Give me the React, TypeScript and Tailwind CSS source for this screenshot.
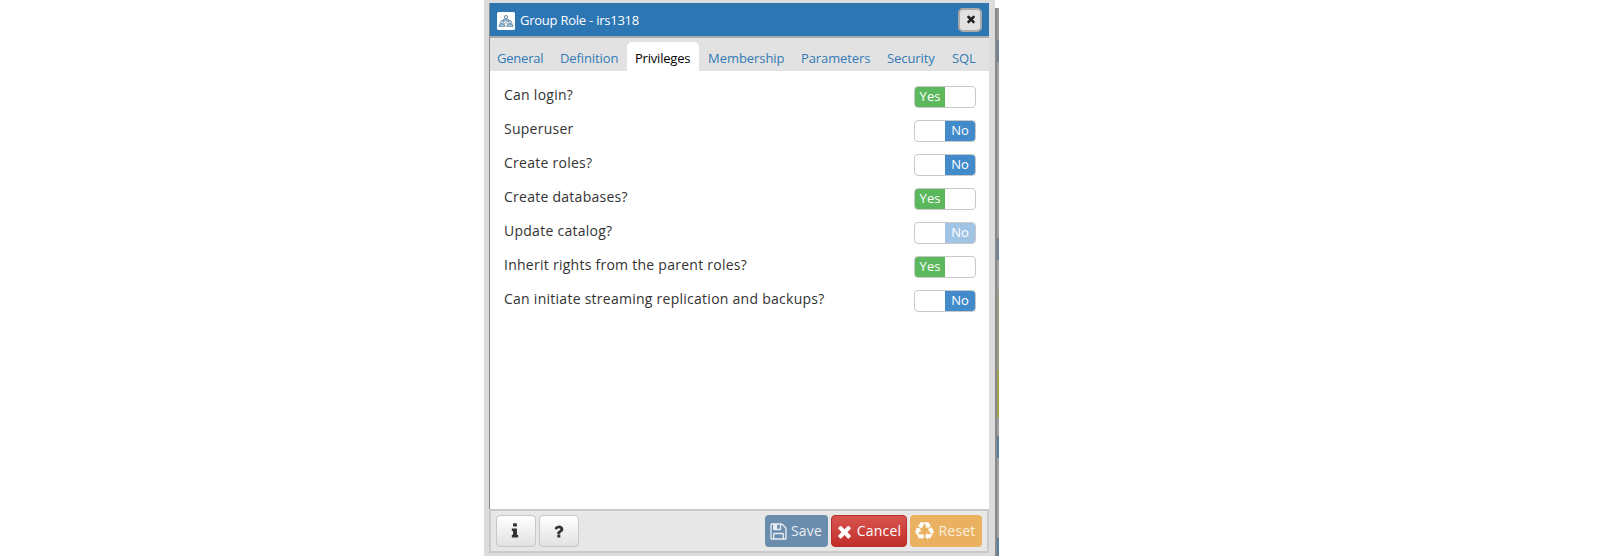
import React from "react";

const floppy = "M512 1536h768v-384h-768v384zm896 0h128v-896q0-14-10-38.5t-20-34.5l-281-281q-10-10-34-20t-39-10v416q0 40-28 68t-68 28h-576q-40 0-68-28t-28-68v-416h-128v1280h128v-416q0-40 28-68t68-28h832q40 0 68 28t28 68v416zm-384-928v-320q0-13-9.5-22.5t-22.5-9.5h-192q-13 0-22.5 9.5t-9.5 22.5v320q0 13 9.5 22.5t22.5 9.5h192q13 0 22.5-9.5t9.5-22.5zm640 32v928q0 40-28 68t-68 28h-1344q-40 0-68-28t-28-68v-1344q0-40 28-68t68-28h928q40 0 88 20t76 48l280 280q28 28 48 76t20 88z";
const times = "M1490 1322q0 40-28 68l-136 136q-28 28-68 28t-68-28l-294-294-294 294q-28 28-68 28t-68-28l-136-136q-28-28-28-68t28-68l294-294-294-294q-28-28-28-68t28-68l136-136q28-28 68-28t68 28l294 294 294-294q28-28 68-28t68 28l136 136q28 28 28 68t-28 68l-294 294 294 294q28 28 28 68z";
const info = "M1216 1344v128q0 26-19 45t-45 19h-512q-26 0-45-19t-19-45v-128q0-26 19-45t45-19h64v-384h-64q-26 0-45-19t-19-45v-128q0-26 19-45t45-19h384q26 0 45 19t19 45v576h64q26 0 45 19t19 45zm-128-1152v192q0 26-19 45t-45 19h-256q-26 0-45-19t-19-45v-192q0-26 19-45t45-19h256q26 0 45 19t19 45z";
const question = "M1088 1256v240q0 16-12 28t-28 12h-240q-16 0-28-12t-12-28v-240q0-16 12-28t28-12h240q16 0 28 12t12 28zm316-600q0 54-15.5 101t-35 76.5-55 59.5-57.5 43.5-61 35.5q-41 23-68.5 65t-27.5 67q0 17-12 32.5t-28 15.5h-240q-15 0-25.5-18.5t-10.5-37.5v-45q0-83 65-156.5t143-108.5q59-27 84-56t25-76q0-42-46.5-74t-107.5-32q-65 0-108 29-35 25-107 115-13 16-31 16-12 0-25-8l-164-125q-13-10-15.5-25t5.5-28q160-266 464-266 80 0 161 31t146 83 106 127.5 41 158.5z";
const recycle = "M836 1169l-15 368-2 22-420-29q-36-3-67-31.5t-47-65.5q-11-27-14.5-55t4-65 12-55 21.5-64 19-53q78 12 509 28zm-387-586l180 379-147-92q-63 72-111.5 144.5t-72.5 125-39.5 94.5-18.5 63l-4 21-190-357q-17-26-18-56t6-47l8-18q35-63 114-188l-140-86zm1231 517l-188 359q-12 29-36.5 46.5t-43.5 20.5l-18 4q-71 7-219 12l8 164-230-367 211-362 7 173q170 16 283 5t170-33zm-785-924q-47 63-265 435l-317-187-19-12 225-356q20-31 60-45t80-10q24 2 48.5 12t42 21 41.5 33 36 34.5 36 39.5 32 35zm655 307l212 363q18 37 12.5 76t-27.5 74q-13 20-33 37t-38 28-48.5 22-47 16-51.5 14-46 12q-34-72-265-436l313-195zm-143-226l142-83-220 373-419-20 151-86q-34-89-75-166t-75.5-123.5-64.5-80-47-46.5l-17-13 405 1q31-3 58 10.5t39 28.5l11 15q39 61 112 190z";

function Icon({ d, className }: { d: string; className: string }) {
  return (
    <svg viewBox="0 0 1792 1792" fill="currentColor" className={className}>
      <path d={d} />
    </svg>
  );
}

function GroupIcon() {
  return (
    <svg viewBox="0 0 18 18" className="h-[18px] w-[18px] shrink-0" fill="none" stroke="#5d87a8" strokeWidth="0.9">
      <rect width="18" height="18" rx="1.5" fill="#fff" stroke="none" />
      <path d="M7 7 2.500 12M11 7l4.500 5M7 12l2-1.500 2 1.500" stroke="#8a9aa6" />
      <circle cx="9" cy="5" r="1.600" fill="#e4edf4" />
      <path d="M6.200 9q0-2.200 2.800-2.200t2.800 2.200z" fill="#b9d3e6" />
      <circle cx="5" cy="10.300" r="1.500" fill="#e4edf4" />
      <path d="M1.800 14.300q0-2.300 3.200-2.300t3.200 2.300z" fill="#b9d3e6" />
      <circle cx="13" cy="10.300" r="1.500" fill="#e4edf4" />
      <path d="M9.800 14.300q0-2.300 3.200-2.300t3.200 2.300z" fill="#b9d3e6" />
    </svg>
  );
}

const tabs = [
  { label: "General", box: "w-[62px] pl-[7px] tracking-[-0.2px]" },
  { label: "Definition", box: "w-[75px] pl-2 tracking-[-0.1px]" },
  { label: "Privileges", box: "mr-px w-[71px] pl-2 tracking-[-0.2px]", active: true },
  { label: "Membership", box: "ml-px w-[93px] pl-2 tracking-[-0.05px]" },
  { label: "Parameters", box: "w-[86px] pl-2 tracking-[-0.1px]" },
  { label: "Security", box: "w-[65px] pl-2 tracking-[-0.08px]" },
  { label: "SQL", box: "w-[32px] pl-2 tracking-[-0.1px]" },
];

const privileges = [
  { label: "Can login?", on: true },
  { label: "Superuser", on: false },
  { label: "Create roles?", on: false },
  { label: "Create databases?", on: true },
  { label: "Update catalog?", on: false, disabled: true },
  { label: "Inherit rights from the parent roles?", on: true },
  { label: "Can initiate streaming replication and backups?", on: false },
];

// Slice of the page behind the dialog, top to bottom.
const backdrop = [
  "h-8 bg-[#999]",
  "h-[22px] bg-[#6f8597]",
  "h-[176px] bg-[#a0a0a0]",
  "h-[22px] bg-[#6f8597]",
  "h-[30px] bg-[#a0a0a0]",
  "h-[80px] bg-[#9d9d84]",
  "h-[48px] bg-[#a0a54e]",
  "h-[18px] bg-[#a0a0a0]",
  "h-[22px] bg-[#567fa0]",
  "h-[80px] bg-[#a0a0a0]",
  "h-[18px] bg-[#567fa0]",
];

function Toggle({ on, disabled }: { on: boolean; disabled?: boolean }) {
  return (
    <div className="mt-[15px] flex h-[22px] w-[62px] overflow-hidden rounded-[4px] border border-[#c8c8c8] bg-white text-[13px] leading-[19px] text-white">
      <span className={on ? "w-[30px] bg-[#5cb85c] text-center" : "w-[30px]"}>{on && "Yes"}</span>
      <span className={on ? "w-[30px]" : disabled ? "w-[30px] bg-[#a1c4e5] text-center" : "w-[30px] bg-[#428bca] text-center"}>{!on && "No"}</span>
    </div>
  );
}

export default function App() {
  return (
    <div className="flex h-[556px] w-[1611px] overflow-hidden bg-white pl-[484px] font-['Open_Sans',sans-serif]">
      <div className="flex h-full w-[511px] flex-col bg-[#dcdcdc] pt-[3px] pr-[6px] pl-[5px]">
        <header className="flex h-[35px] shrink-0 items-center border-b-2 border-l border-b-[#aaa] border-l-[#888] bg-[#2c76b4] pr-[7px] pl-[7px] text-[13px] text-white">
          <div className="pt-[3px]"><GroupIcon /></div>
          <span className="ml-[5px] grow pt-[2px] tracking-[-0.24px]">Group Role - irs1318</span>
          <button className="flex h-6 w-6 items-center justify-center rounded-[5px] border-2 border-[#aaa] bg-[#e2e2e2] pb-[2px] pl-px text-[#222]">
            <Icon d={times} className="h-3 w-3" />
          </button>
        </header>
        <nav className="flex h-[33px] shrink-0 items-end border-l border-[#888] bg-[#e2e2e2] text-[13px] leading-[33px] text-[#337ab7]">
          {tabs.map((t) => (
            <div key={t.label} className={t.active ? "rounded-t-[5px] bg-white text-black" : ""}>
              <div className={`h-[29px] ${t.box}`}>{t.label}</div>
            </div>
          ))}
        </nav>
        <main className="grow border-l border-[#888] bg-white pr-[13px] pl-[14px] text-[14px] text-[#333]">
          {privileges.map((p) => (
            <div key={p.label} className="flex h-[34px] justify-between">
              <span className="pt-[14px] leading-[20px] tracking-[0.26px]">{p.label}</span>
              <Toggle on={p.on} disabled={p.disabled} />
            </div>
          ))}
        </main>
        <footer className="mb-[3px] flex h-11 shrink-0 items-center gap-[3px] border-2 border-[#cacaca] bg-[#e7e7e7] px-[5px] text-[14px] leading-[20px] tracking-[0.2px] text-white">
          <button className="flex h-8 w-10 items-center justify-center rounded-[4px] border border-[#c8c8c8] bg-linear-to-b from-white to-[#e2e2e2] pr-[2px] text-[#333]">
            <Icon d={info} className="h-[18px] w-[18px]" />
          </button>
          <button className="mr-auto flex h-8 w-10 items-center justify-center rounded-[4px] border border-[#c8c8c8] bg-linear-to-b from-white to-[#e2e2e2] pr-px text-[#333]">
            <Icon d={question} className="h-[17px] w-[17px]" />
          </button>
          <button className="flex h-8 w-[63px] items-center justify-center gap-[3px] rounded-[4px] bg-[#6a8cad] pr-[2px] text-[#e8eef4]">
            <Icon d={floppy} className="h-[19px] w-[19px]" />
            <span>Save</span>
          </button>
          <button className="flex h-8 w-[76px] items-center justify-center gap-[3px] rounded-[4px] border border-[#b92c28] bg-linear-to-b from-[#d9534f] to-[#c12e2a] pr-[2px]">
            <Icon d={times} className="h-[19px] w-[19px]" />
            <span>Cancel</span>
          </button>
          <button className="flex h-8 w-[72px] items-center justify-center gap-1 rounded-[4px] bg-[#eab160] pr-px text-[#fbefdd]">
            <Icon d={recycle} className="h-[19px] w-[19px] text-white" />
            <span>Reset</span>
          </button>
        </footer>
      </div>
      <div className="mt-2 w-[2px] bg-[#888]" />
      <div className="mt-2 flex w-[2px] flex-col">
        {backdrop.map((c, i) => (
          <div key={i} className={c} />
        ))}
      </div>
    </div>
  );
}
